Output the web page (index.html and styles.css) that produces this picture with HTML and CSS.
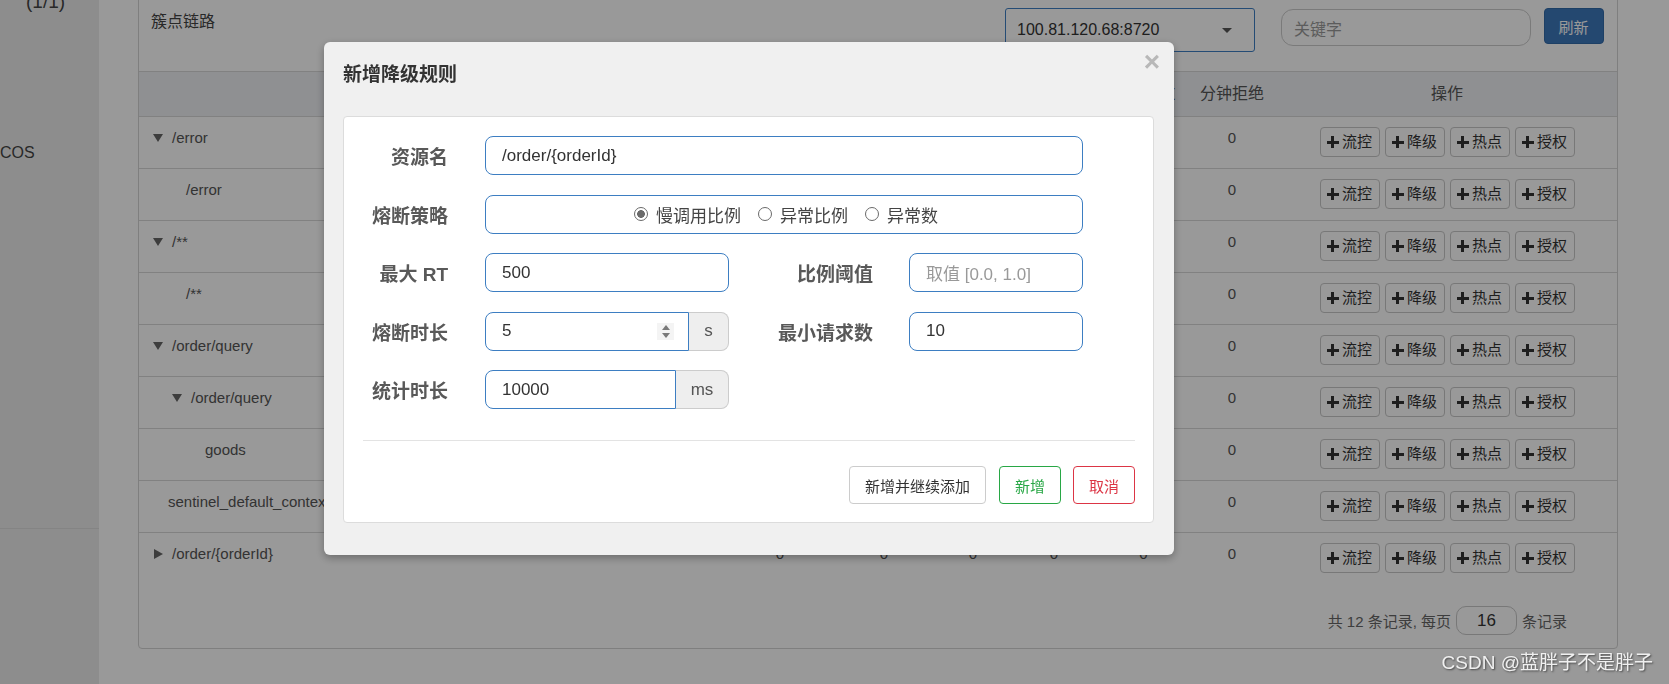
FILE: index.html
```html
<!DOCTYPE html>
<html lang="zh-CN">
<head>
<meta charset="utf-8">
<title>簇点链路 - 新增降级规则</title>
<link rel="stylesheet" href="styles.css">
</head>
<body>
<div class="page">
  <aside class="sidebar">
    <div class="sb-count">(1/1)</div>
    <div class="sb-item">COS</div>
    <div class="sb-line"></div>
  </aside>
  <main class="main">
    <section class="panel">
      <div class="panel-head">
        <h3 class="panel-title">簇点链路</h3>
        <div class="head-tools">
          <div class="select"><span>100.81.120.68:8720</span><span class="caret"></span></div>
          <div class="search">关键字</div>
          <div class="btn-refresh">刷新</div>
        </div>
      </div>
      <table class="tree-table">
        <colgroup>
          <col class="c-res"><col class="c-pq"><col class="c-bq"><col class="c-th"><col class="c-rt"><col class="c-mp"><col class="c-mb"><col class="c-op">
        </colgroup>
        <thead>
          <tr><th>资源名</th><th>通过QPS</th><th>拒绝QPS</th><th>并发数</th><th>平均RT</th><th>分钟通过</th><th>分钟拒绝</th><th>操作</th></tr>
        </thead>
        <tbody>
          <tr><td class="res"><span class="arrow-down"></span>/error</td><td>0</td><td>0</td><td>0</td><td>0</td><td>0</td><td>0</td><td><div class="ops"><span class="op"><i class="plus"></i>流控</span><span class="op"><i class="plus"></i>降级</span><span class="op"><i class="plus"></i>热点</span><span class="op"><i class="plus"></i>授权</span></div></td></tr>
          <tr><td class="res"><span class="ind-33"></span>/error</td><td>0</td><td>0</td><td>0</td><td>0</td><td>0</td><td>0</td><td><div class="ops"><span class="op"><i class="plus"></i>流控</span><span class="op"><i class="plus"></i>降级</span><span class="op"><i class="plus"></i>热点</span><span class="op"><i class="plus"></i>授权</span></div></td></tr>
          <tr><td class="res"><span class="arrow-down"></span>/**</td><td>0</td><td>0</td><td>0</td><td>0</td><td>0</td><td>0</td><td><div class="ops"><span class="op"><i class="plus"></i>流控</span><span class="op"><i class="plus"></i>降级</span><span class="op"><i class="plus"></i>热点</span><span class="op"><i class="plus"></i>授权</span></div></td></tr>
          <tr><td class="res"><span class="ind-33"></span>/**</td><td>0</td><td>0</td><td>0</td><td>0</td><td>0</td><td>0</td><td><div class="ops"><span class="op"><i class="plus"></i>流控</span><span class="op"><i class="plus"></i>降级</span><span class="op"><i class="plus"></i>热点</span><span class="op"><i class="plus"></i>授权</span></div></td></tr>
          <tr><td class="res"><span class="arrow-down"></span>/order/query</td><td>0</td><td>0</td><td>0</td><td>0</td><td>0</td><td>0</td><td><div class="ops"><span class="op"><i class="plus"></i>流控</span><span class="op"><i class="plus"></i>降级</span><span class="op"><i class="plus"></i>热点</span><span class="op"><i class="plus"></i>授权</span></div></td></tr>
          <tr><td class="res"><span class="ind-19"></span><span class="arrow-down"></span>/order/query</td><td>0</td><td>0</td><td>0</td><td>0</td><td>0</td><td>0</td><td><div class="ops"><span class="op"><i class="plus"></i>流控</span><span class="op"><i class="plus"></i>降级</span><span class="op"><i class="plus"></i>热点</span><span class="op"><i class="plus"></i>授权</span></div></td></tr>
          <tr><td class="res"><span class="ind-52"></span>goods</td><td>0</td><td>0</td><td>0</td><td>0</td><td>0</td><td>0</td><td><div class="ops"><span class="op"><i class="plus"></i>流控</span><span class="op"><i class="plus"></i>降级</span><span class="op"><i class="plus"></i>热点</span><span class="op"><i class="plus"></i>授权</span></div></td></tr>
          <tr><td class="res"><span class="ind-15"></span>sentinel_default_context</td><td>0</td><td>0</td><td>0</td><td>0</td><td>0</td><td>0</td><td><div class="ops"><span class="op"><i class="plus"></i>流控</span><span class="op"><i class="plus"></i>降级</span><span class="op"><i class="plus"></i>热点</span><span class="op"><i class="plus"></i>授权</span></div></td></tr>
          <tr><td class="res"><span class="ind-1"></span><span class="arrow-right"></span>/order/{orderId}</td><td>0</td><td>0</td><td>0</td><td>0</td><td>0</td><td>0</td><td><div class="ops"><span class="op"><i class="plus"></i>流控</span><span class="op"><i class="plus"></i>降级</span><span class="op"><i class="plus"></i>热点</span><span class="op"><i class="plus"></i>授权</span></div></td></tr>
        </tbody>
      </table>
      <div class="pager">
        <span>共 12 条记录, 每页</span>
        <span class="page-size">16</span>
        <span>条记录</span>
      </div>
    </section>
  </main>
</div>

<div class="backdrop"></div>

<div class="modal">
  <div class="modal-head">
    <h4 class="modal-title">新增降级规则</h4>
    <span class="modal-close">×</span>
  </div>
  <div class="modal-panel">
    <div class="form">
      <div class="lbl">资源名</div>
      <div class="field span3">/order/{orderId}</div>

      <div class="lbl">熔断策略</div>
      <div class="field span3 radios">
        <span class="radio-item"><span class="radio checked"></span>慢调用比例</span>
        <span class="radio-item"><span class="radio"></span>异常比例</span>
        <span class="radio-item"><span class="radio"></span>异常数</span>
      </div>

      <div class="lbl">最大 RT</div>
      <div class="field">500</div>
      <div class="lbl lbl2">比例阈值</div>
      <div class="field placeholder">取值 [0.0, 1.0]</div>

      <div class="lbl">熔断时长</div>
      <div class="group">
        <div class="field g-field"><span>5</span><span class="spin"><i class="up"></i><i class="down"></i></span></div>
        <div class="addon addon-s">s</div>
      </div>
      <div class="lbl lbl2">最小请求数</div>
      <div class="field">10</div>

      <div class="lbl">统计时长</div>
      <div class="group">
        <div class="field g-field">10000</div>
        <div class="addon addon-ms">ms</div>
      </div>
    </div>
    <div class="divider"></div>
    <div class="footer">
      <span class="btn btn-default">新增并继续添加</span>
      <span class="btn btn-ok">新增</span>
      <span class="btn btn-cancel">取消</span>
    </div>
  </div>
</div>

<div class="watermark">CSDN @蓝胖子不是胖子</div>
</body>
</html>
```

FILE: styles.css
```css
* { box-sizing: border-box; }
html, body {
  margin: 0;
  padding: 0;
  background: #fff;
  width: 1669px;
  height: 684px;
  overflow: hidden;
  font-family: "Liberation Sans", "Noto Sans CJK SC", sans-serif;
  color: #333;
}

.page {
  display: flex;
  width: 1669px;
  height: 684px;
}

/* sidebar */
.sidebar {
  width: 99px;
  flex-shrink: 0;
  background: #ececec;
  display: flex;
  flex-direction: column;
  overflow: hidden;
}
.sb-count {
  font-size: 19px;
  line-height: 22px;
  margin-top: -9px;
  padding-left: 26px;
  color: #444;
}
.sb-item {
  font-size: 16px;
  line-height: 22px;
  margin-top: 129px;
  color: #444;
}
.sb-line {
  height: 1px;
  background: #dcdcdc;
  margin-top: 364px;
}

/* main */
.main {
  flex: 1;
  padding-left: 39px;
}
.panel {
  width: 1480px;
  margin-top: -1px;
  border: 1px solid #d4d4d4;
  border-radius: 0 0 4px 4px;
  background: #fff;
}
.panel-head {
  height: 71px;
  display: flex;
  align-items: flex-start;
  justify-content: space-between;
  padding: 8px 13.5px 0 12px;
}
.panel-title {
  margin: 3px 0 0 0;
  font-size: 16px;
  line-height: 22px;
  font-weight: normal;
  color: #444;
}
.head-tools {
  display: flex;
  align-items: flex-start;
}
.select {
  width: 250px;
  height: 44px;
  border: 1px solid #3f7fc4;
  border-radius: 3px;
  display: flex;
  align-items: center;
  justify-content: space-between;
  padding: 0 22px 0 11px;
  font-size: 16px;
  color: #333;
  background: #fff;
}
.caret {
  width: 0;
  height: 0;
  border-left: 5px solid transparent;
  border-right: 5px solid transparent;
  border-top: 5px solid #555;
}
.search {
  width: 250px;
  height: 37px;
  margin: 1px 0 0 26px;
  border: 1px solid #ccc;
  border-radius: 12px;
  padding-left: 12px;
  display: flex;
  align-items: center;
  font-size: 16px;
  color: #999;
}
.btn-refresh {
  width: 60px;
  height: 36px;
  margin-left: 12.5px;
  background: #3c78bb;
  border: 1px solid #336ba8;
  border-radius: 4px;
  color: #fff;
  font-size: 15px;
  display: flex;
  align-items: center;
  justify-content: center;
}

/* table */
.tree-table {
  width: 1478px;
  table-layout: fixed;
  border-collapse: separate;
  border-spacing: 0;
  font-size: 15px;
}
.c-res { width: 591px; }
.c-pq { width: 100px; }
.c-bq { width: 108px; }
.c-th { width: 70px; }
.c-rt { width: 92px; }
.c-mp { width: 87px; }
.c-mb { width: 90px; }
.c-op { width: 340px; }
.tree-table th {
  background: #eef0f4;
  border-top: 1px solid #d8d8d8;
  padding: 11px 8px;
  line-height: 22px;
  font-size: 16px;
  font-weight: normal;
  color: #555;
  text-align: center;
  white-space: nowrap;
}
.tree-table td {
  border-top: 1px solid #d8d8d8;
  padding: 10px 8px 11px;
  line-height: 22px;
  vertical-align: top;
  text-align: center;
  color: #555;
  white-space: nowrap;
}
.tree-table td.res {
  text-align: left;
  padding-left: 14px;
  overflow: hidden;
}
.ind-1, .ind-15, .ind-19, .ind-33, .ind-52 { display: inline-block; height: 1px; }
.ind-1 { width: 1px; }
.ind-15 { width: 15px; }
.ind-19 { width: 19px; }
.ind-33 { width: 33px; }
.ind-52 { width: 52px; }
.arrow-down {
  display: inline-block;
  width: 0;
  height: 0;
  border-left: 5px solid transparent;
  border-right: 5px solid transparent;
  border-top: 8px solid #666;
  margin-right: 9px;
  vertical-align: 1px;
}
.arrow-right {
  display: inline-block;
  width: 0;
  height: 0;
  border-top: 5px solid transparent;
  border-bottom: 5px solid transparent;
  border-left: 9px solid #666;
  margin-right: 9px;
  vertical-align: 0;
}
.ops {
  display: flex;
  justify-content: center;
  gap: 5px;
  height: 30px;
}
.op {
  width: 60px;
  height: 30px;
  border: 1px solid #c8c8c8;
  border-radius: 4px;
  background: #fff;
  display: flex;
  align-items: center;
  justify-content: center;
  gap: 3px;
  font-size: 15px;
  color: #333;
}
.plus {
  position: relative;
  width: 12px;
  height: 12px;
  display: inline-block;
}
.plus::before, .plus::after {
  content: "";
  position: absolute;
  background: #333;
}
.plus::before { left: 0; top: 4.5px; width: 12px; height: 3px; }
.plus::after { left: 4.5px; top: 0; width: 3px; height: 12px; }

.pager {
  display: flex;
  justify-content: flex-end;
  align-items: center;
  gap: 5px;
  padding: 22px 50px 13px 0;
  font-size: 15px;
  color: #666;
}
.page-size {
  width: 61px;
  height: 29px;
  border: 1px solid #c8c8c8;
  border-radius: 10px;
  display: flex;
  align-items: center;
  justify-content: center;
  font-size: 17px;
  color: #333;
}

/* backdrop and modal */
.backdrop {
  position: fixed;
  inset: 0;
  background: rgba(0, 0, 0, 0.4);
  z-index: 10;
}
.modal {
  position: fixed;
  left: 324px;
  top: 42px;
  width: 850px;
  z-index: 20;
  background: #f0f0f0;
  border-radius: 6px;
  padding: 0 20px 32px 19px;
  box-shadow: 0 3px 9px rgba(0, 0, 0, 0.3);
}
.modal-head {
  height: 74px;
  display: flex;
  justify-content: space-between;
  align-items: flex-start;
  padding: 22px 0 0 0;
  margin-right: -6px;
}
.modal-title {
  margin: 0;
  font-size: 19px;
  line-height: 22px;
  font-weight: bold;
  color: #333;
}
.modal-close {
  font-size: 28px;
  line-height: 26px;
  font-weight: bold;
  color: #b8b8b8;
  margin-top: -15px;
}
.modal-panel {
  background: #fff;
  border: 1px solid #dcdcdc;
  border-radius: 4px;
  padding: 19px 18px 18px 19px;
}
.form {
  display: grid;
  grid-template-columns: 122px 244px 180px 174px;
  grid-auto-rows: 39px;
  row-gap: 19.5px;
}
.lbl {
  display: flex;
  align-items: center;
  justify-content: flex-end;
  padding-right: 37px;
  font-size: 19px;
  font-weight: bold;
  color: #595959;
  white-space: nowrap;
}
.lbl2 { padding-right: 36px; }
.field {
  height: 39px;
  border: 1px solid #3d7ec2;
  border-radius: 8px;
  padding: 0 16px;
  display: flex;
  align-items: center;
  font-size: 17px;
  color: #333;
  background: #fff;
}
.span3 { grid-column: 2 / 5; }
.placeholder { color: #999; }
.radios {
  justify-content: center;
  gap: 17px;
  padding-left: 20px;
}
.radio-item {
  display: flex;
  align-items: center;
  gap: 8px;
  color: #444;
}
.radio {
  width: 14px;
  height: 14px;
  border: 1.5px solid #6a6a6a;
  border-radius: 50%;
  background: #fff;
  display: inline-block;
}
.radio.checked {
  background: radial-gradient(circle, #6a6a6a 0 3.6px, #fff 4.1px);
}
.group {
  display: flex;
}
.g-field {
  flex: 1;
  border-radius: 8px 0 0 8px;
  justify-content: space-between;
}
.spin {
  width: 17px;
  height: 17px;
  margin-right: -2px;
  background: #f4f4f4;
  display: flex;
  flex-direction: column;
  align-items: center;
  justify-content: center;
  gap: 3px;
}
.spin i {
  width: 0;
  height: 0;
  border-left: 4px solid transparent;
  border-right: 4px solid transparent;
}
.spin .up { border-bottom: 5px solid #7a7a7a; }
.spin .down { border-top: 5px solid #7a7a7a; }
.addon {
  height: 39px;
  background: #eee;
  border: 1px solid #ccc;
  border-left: none;
  border-radius: 0 8px 8px 0;
  display: flex;
  align-items: center;
  justify-content: center;
  font-size: 17px;
  color: #555;
}
.addon-s { width: 40px; }
.addon-ms { width: 53px; }
.divider {
  height: 1px;
  background: #e3e3e3;
  margin-top: 31px;
}
.footer {
  display: flex;
  justify-content: flex-end;
  padding-top: 25px;
}
.btn {
  height: 38px;
  border: 1px solid #ccc;
  border-radius: 4px;
  display: flex;
  align-items: center;
  justify-content: center;
  font-size: 15px;
  background: #fff;
}
.btn-default { width: 137px; color: #333; }
.btn-ok { width: 62px; margin-left: 13px; color: #28a745; border-color: #28a745; }
.btn-cancel { width: 62px; margin-left: 12px; color: #dc3545; border-color: #dc3545; }

.watermark {
  position: fixed;
  right: 16px;
  bottom: 9px;
  z-index: 30;
  font-size: 19px;
  line-height: 24px;
  color: #f0f0f0;
  text-shadow: 1px 1px 2px rgba(0, 0, 0, 0.55);
  white-space: nowrap;
}
```
